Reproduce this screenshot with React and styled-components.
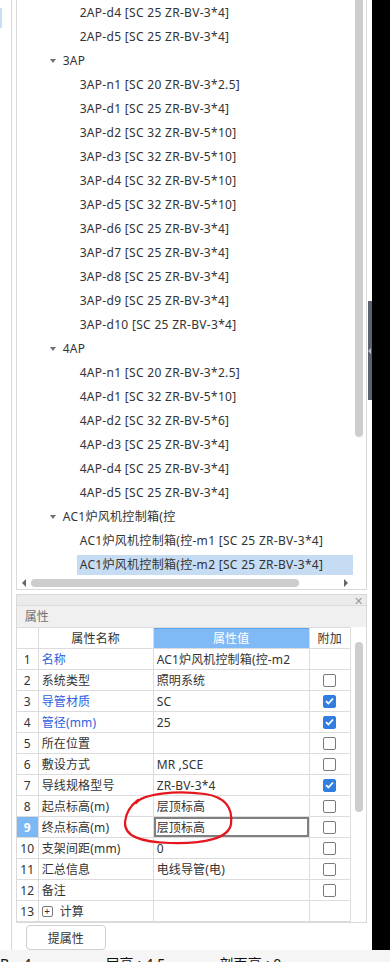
import React from "react";
import styled, { createGlobalStyle } from "styled-components";

const GlobalStyle = createGlobalStyle`
  html, body {
    margin: 0;
    padding: 0;
    background: #ffffff;
  }
  body {
    font-family: "Noto Sans", "Noto Sans CJK SC", sans-serif;
  }
  #root {
    width: 390px;
    height: 962px;
    overflow: hidden;
  }
`;

const Page = styled.div`
  position: relative;
  width: 390px;
  height: 962px;
  display: flex;
  flex-direction: column;
  overflow: hidden;
  font-size: 12px;
  letter-spacing: 0.15px;
  color: #333333;
`;

const Main = styled.div`
  display: flex;
  height: 950px;
`;

const LeftRail = styled.div`
  width: 11px;
  border-right: 1px solid #d6d6d6;
  padding-top: 8px;
  margin-right: 4px;
`;

const RailTab = styled.div`
  width: 2px;
  height: 20px;
  background: #c9def5;
`;

const Column = styled.div`
  width: 351px;
  display: flex;
  flex-direction: column;
`;

/* ---------- tree ---------- */

const TreePanel = styled.div`
  height: 590px;
  box-sizing: border-box;
  border: 1px solid #d9d9d9;
  border-top: none;
  display: grid;
  grid-template-columns: 336px 13px;
  grid-template-rows: 577px 12px;
`;

const TreeView = styled.div`
  overflow: hidden;
  padding-top: 1px;
`;

const TreeRow = styled.div`
  height: 24px;
  display: flex;
  align-items: center;
  padding-left: ${(p) => (p.$group ? 33 : 60)}px;
  white-space: nowrap;
`;

const Caret = styled.span`
  width: 0;
  height: 0;
  border-left: 3px solid transparent;
  border-right: 3px solid transparent;
  border-top: 4px solid #707070;
  margin-right: 4px;
`;

const TreeLabel = styled.span`
  flex: 1;
  height: 20px;
  line-height: 20px;
  padding: 0 3px;
  letter-spacing: 0.3px;
  background: ${(p) => (p.$selected ? "#c5dcf2" : "transparent")};
`;

const VScroll = styled.div`
  padding-left: 2px;
`;

const VThumb = styled.div`
  width: 8px;
  height: ${(p) => p.$h}px;
  margin-top: ${(p) => p.$top || 0}px;
  background: #cdcdcd;
  border-radius: ${(p) => (p.$round ? "4px" : "0 0 4px 4px")};
`;

const HScroll = styled.div`
  display: flex;
  align-items: center;
  padding: 0 5px;
`;

const Arrow = styled.span`
  width: 0;
  height: 0;
  border-top: 4px solid transparent;
  border-bottom: 4px solid transparent;
  ${(p) =>
    p.$right
      ? "border-left: 4px solid #666666; margin-left: auto;"
      : "border-right: 4px solid #666666;"}
`;

const HThumb = styled.div`
  width: 268px;
  height: 8px;
  margin-left: 5px;
  border-radius: 4px;
  background: #cdcdcd;
`;

/* ---------- property panel ---------- */

const PropPanel = styled.div`
  margin-top: 4px;
  height: 329px;
  box-sizing: border-box;
  border: 1px solid #d9d9d9;
  display: flex;
  flex-direction: column;
`;

const TopBar = styled.div`
  height: 10px;
  background: #ebebeb;
  border-bottom: 1px solid #dcdcdc;
  display: flex;
  justify-content: flex-end;
  align-items: center;
  padding-right: 3px;
  color: #9a9a9a;
  font-size: 11px;
`;

const Title = styled.div`
  height: 21px;
  line-height: 21px;
  padding-left: 8px;
  background: #f0f0f0;
  color: #707070;
`;

const Body = styled.div`
  display: flex;
  flex: 1;
`;

const Table = styled.div`
  width: 334px;
`;

const Row = styled.div`
  display: grid;
  grid-template-columns: 22px 115px 156px 41px;
  height: ${(p) => (p.$head ? 22 : 21)}px;
  box-sizing: border-box;
  border-bottom: 1px solid #dcdcdc;
  border-top: ${(p) => (p.$head ? "1px solid #dcdcdc" : "none")};
`;

const Cell = styled.div`
  box-sizing: border-box;
  border-right: 1px solid #dcdcdc;
  display: flex;
  align-items: center;
  white-space: nowrap;
  overflow: hidden;
  padding-left: 3px;
  color: ${(p) => (p.$blue ? "#2e5fe0" : "#333333")};
`;

const NumCell = styled(Cell)`
  justify-content: center;
  padding-left: 0;
  background: ${(p) => (p.$active ? "#7cb8f5" : "transparent")};
  color: ${(p) => (p.$active ? "#ffffff" : "#333333")};
  font-weight: ${(p) => (p.$active ? 700 : 400)};
`;

const HeadCell = styled(Cell)`
  justify-content: center;
  padding-left: 0;
  background: ${(p) => (p.$active ? "#7fbaf6" : "transparent")};
  color: ${(p) => (p.$active ? "#ffffff" : "#333333")};
  box-shadow: ${(p) => (p.$active ? "inset 0 1px 0 #5fa6ef" : "none")};
`;

const ValueCell = styled(Cell)`
  box-shadow: ${(p) => (p.$editing ? "inset 0 0 0 2px #808080" : "none")};
`;

const CheckCell = styled(Cell)`
  justify-content: center;
  padding-left: 0;
`;

const Box = styled.span`
  width: 13px;
  height: 13px;
  box-sizing: border-box;
  border-radius: 2px;
  border: 1px solid ${(p) => (p.$checked ? "#2f7ee0" : "#7a7a7a")};
  background: ${(p) => (p.$checked ? "#2f7ee0" : "#ffffff")};
  display: flex;
  align-items: center;
  justify-content: center;
`;

const Expander = styled.span`
  width: 11px;
  height: 11px;
  box-sizing: border-box;
  border: 1px solid #7a7a7a;
  border-radius: 2px;
  display: inline-flex;
  align-items: center;
  justify-content: center;
  font-size: 10px;
  line-height: 1;
  margin-right: 7px;
`;

const TableScroll = styled.div`
  width: 15px;
  padding-left: 4px;
`;

const ButtonRow = styled.div`
  height: 27px;
  padding: 2px 0 0 10px;
`;

const Button = styled.button`
  width: 80px;
  height: 25px;
  border: 1px solid #cfcfcf;
  border-radius: 4px;
  background: #ffffff;
  font-family: inherit;
  font-size: 12px;
  color: #333333;
  padding: 0;
`;

const Splitter = styled.div`
  width: 4px;
  padding-top: 301px;
  margin-left: 1px;
`;

const Handle = styled.div`
  height: 99px;
  background: #5c636e;
  display: flex;
  align-items: center;
`;

const HandleArrow = styled.span`
  width: 0;
  height: 0;
  border-top: 3px solid transparent;
  border-bottom: 3px solid transparent;
  border-right: 3px solid #b9bec6;
`;

const BlackStrip = styled.div`
  width: 19px;
  background: #000000;
`;

const StatusStrip = styled.div`
  height: 12px;
  background: #f5f5f5;
  overflow: hidden;
  display: flex;
  gap: 14px;
  padding-top: 6px;
  font-size: 14px;
  line-height: 16px;
  color: #111111;
  white-space: nowrap;
`;

const Annotation = styled.svg`
  position: absolute;
  left: 0;
  top: 0;
  pointer-events: none;
`;

const treeItems = [
  { t: "2AP-d4 [SC 25 ZR-BV-3*4]" },
  { t: "2AP-d5 [SC 25 ZR-BV-3*4]" },
  { t: "3AP", g: true },
  { t: "3AP-n1 [SC 20 ZR-BV-3*2.5]" },
  { t: "3AP-d1 [SC 25 ZR-BV-3*4]" },
  { t: "3AP-d2 [SC 32 ZR-BV-5*10]" },
  { t: "3AP-d3 [SC 32 ZR-BV-5*10]" },
  { t: "3AP-d4 [SC 32 ZR-BV-5*10]" },
  { t: "3AP-d5 [SC 32 ZR-BV-5*10]" },
  { t: "3AP-d6 [SC 25 ZR-BV-3*4]" },
  { t: "3AP-d7 [SC 25 ZR-BV-3*4]" },
  { t: "3AP-d8 [SC 25 ZR-BV-3*4]" },
  { t: "3AP-d9 [SC 25 ZR-BV-3*4]" },
  { t: "3AP-d10 [SC 25 ZR-BV-3*4]" },
  { t: "4AP", g: true },
  { t: "4AP-n1 [SC 20 ZR-BV-3*2.5]" },
  { t: "4AP-d1 [SC 32 ZR-BV-5*10]" },
  { t: "4AP-d2 [SC 32 ZR-BV-5*6]" },
  { t: "4AP-d3 [SC 25 ZR-BV-3*4]" },
  { t: "4AP-d4 [SC 25 ZR-BV-3*4]" },
  { t: "4AP-d5 [SC 25 ZR-BV-3*4]" },
  { t: "AC1炉风机控制箱(控", g: true },
  { t: "AC1炉风机控制箱(控-m1 [SC 25 ZR-BV-3*4]" },
  { t: "AC1炉风机控制箱(控-m2 [SC 25 ZR-BV-3*4]", sel: true },
];

// check: undefined = no box, false = empty, true = ticked
const props = [
  { name: "名称", value: "AC1炉风机控制箱(控-m2", blue: true },
  { name: "系统类型", value: "照明系统", check: false },
  { name: "导管材质", value: "SC", blue: true, check: true },
  { name: "管径(mm)", value: "25", blue: true, check: true },
  { name: "所在位置", value: "", check: false },
  { name: "敷设方式", value: "MR ,SCE", check: false },
  { name: "导线规格型号", value: "ZR-BV-3*4", check: true },
  { name: "起点标高(m)", value: "层顶标高", check: false },
  { name: "终点标高(m)", value: "层顶标高", check: false, active: true },
  { name: "支架间距(mm)", value: "0", check: false },
  { name: "汇总信息", value: "电线导管(电)", check: false },
  { name: "备注", value: "", check: false },
  { name: "计算", value: "", group: true },
];

function Tick() {
  return (
    <svg width="9" height="8" viewBox="0 0 9 8">
      <path d="M1 4.2 L3.4 6.5 L8 1.5" fill="none" stroke="#ffffff" strokeWidth="1.8" />
    </svg>
  );
}

export default function App() {
  return (
    <Page>
      <GlobalStyle />
      <Main>
        <LeftRail>
          <RailTab />
        </LeftRail>
        <Column>
          <TreePanel>
            <TreeView>
              {treeItems.map((it, i) => (
                <TreeRow key={i} $group={it.g}>
                  {it.g && <Caret />}
                  <TreeLabel $selected={it.sel}>{it.t}</TreeLabel>
                </TreeRow>
              ))}
            </TreeView>
            <VScroll>
              <VThumb $h={437} />
            </VScroll>
            <HScroll>
              <Arrow />
              <HThumb />
              <Arrow $right />
            </HScroll>
            <div />
          </TreePanel>

          <PropPanel>
            <TopBar>✕</TopBar>
            <Title>属性</Title>
            <Body>
              <Table>
                <Row $head>
                  <HeadCell />
                  <HeadCell>属性名称</HeadCell>
                  <HeadCell $active>属性值</HeadCell>
                  <HeadCell>附加</HeadCell>
                </Row>
                {props.map((p, i) => (
                  <Row key={i}>
                    <NumCell $active={p.active}>{i + 1}</NumCell>
                    <Cell $blue={p.blue}>
                      {p.group && <Expander>+</Expander>}
                      {p.name}
                    </Cell>
                    <ValueCell $editing={p.active}>{p.value}</ValueCell>
                    <CheckCell>
                      {p.check !== undefined && (
                        <Box $checked={p.check}>{p.check && <Tick />}</Box>
                      )}
                    </CheckCell>
                  </Row>
                ))}
              </Table>
              <TableScroll>
                <VThumb $h={170} $top={15} $round />
              </TableScroll>
            </Body>
          </PropPanel>

          <ButtonRow>
            <Button>提属性</Button>
          </ButtonRow>
        </Column>
        <Splitter>
          <Handle>
            <HandleArrow />
          </Handle>
        </Splitter>
        <BlackStrip />
      </Main>
      <StatusStrip>
        <span>B</span>
        <span>4</span>
        <span style={{ marginLeft: 60 }}>层高 : 4.5</span>
        <span style={{ marginLeft: 40 }}>剖面高 : 0</span>
        <span style={{ marginLeft: 40 }}>.</span>
      </StatusStrip>
      <Annotation width="390" height="962" viewBox="0 0 390 962">
        <path
          d="M136 803 C 143 794, 175 790, 205 794 C 225 797, 233 808, 231 824 C 229 838, 205 844, 170 843 C 140 842, 124 836, 125 822 C 126 812, 130 806, 138 800"
          fill="none"
          stroke="#e5161d"
          strokeWidth="2.2"
          strokeLinecap="round"
        />
      </Annotation>
    </Page>
  );
}
